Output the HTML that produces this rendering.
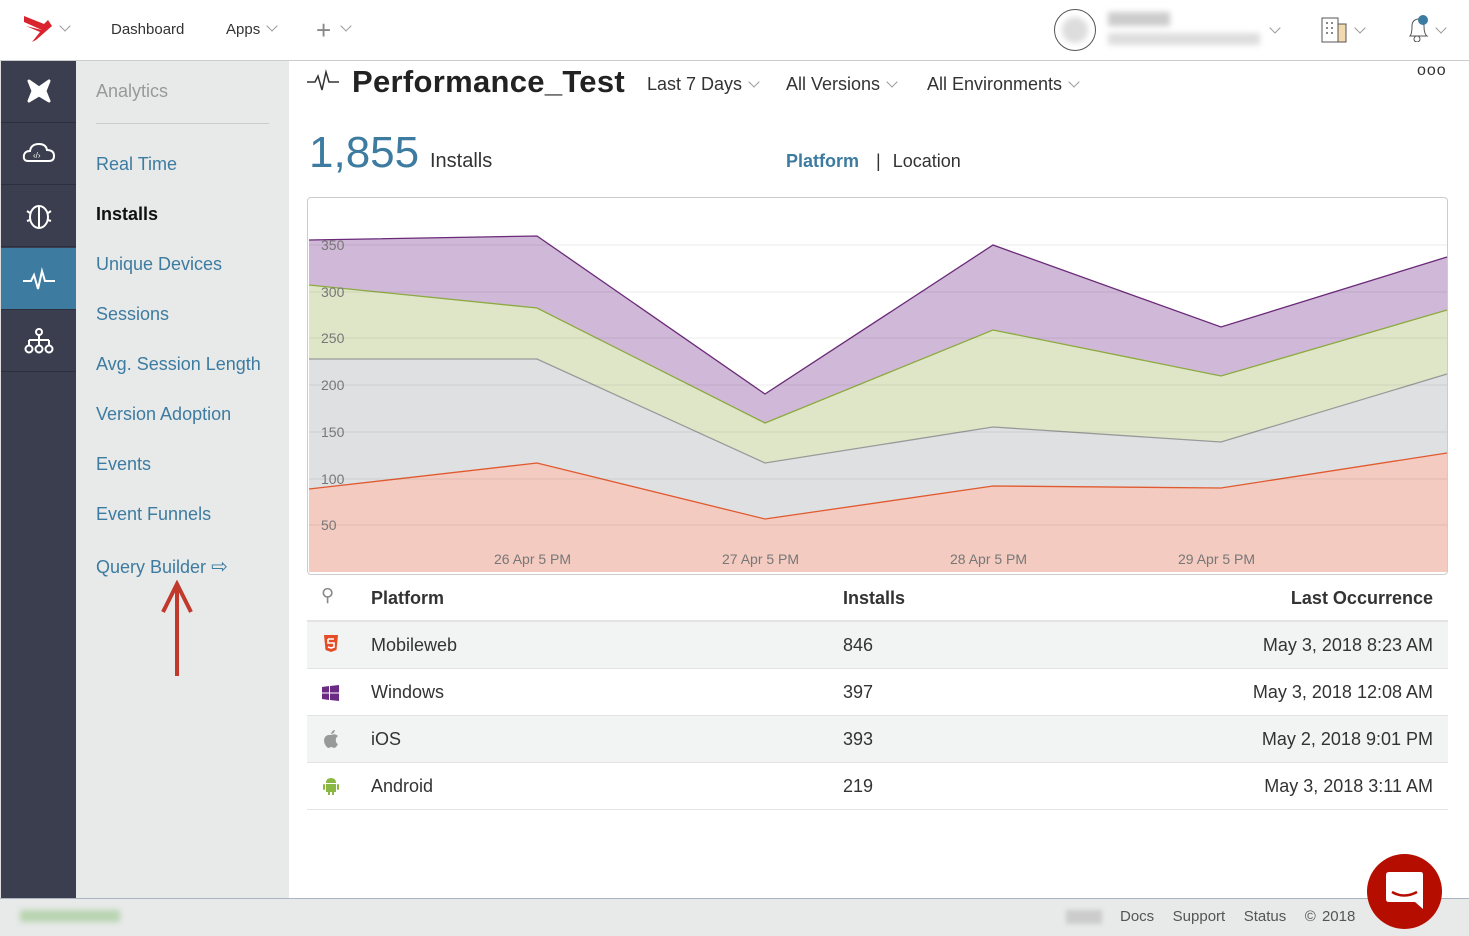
<!DOCTYPE html>
<html><head><meta charset="utf-8"><style>
*{box-sizing:border-box;margin:0;padding:0}
body{width:1469px;height:936px;overflow:hidden;font-family:"Liberation Sans",sans-serif;background:#fff;position:relative;color:#333}
.a{position:absolute}
.hdr{left:0;top:0;width:1469px;height:61px;background:#fff;border-bottom:1px solid #ccc}
.nav{font-size:15px;color:#333;top:21px}
.chev{display:inline-block;width:8px;height:8px;border-right:1px solid #999;border-bottom:1px solid #999;transform:rotate(45deg);margin-left:8px;position:relative;top:-4px}
.ca{position:absolute;width:8px;height:8px;border-right:1px solid #999;border-bottom:1px solid #999;transform:rotate(45deg)}
.side{left:0;top:61px;width:76px;height:837px;background:#3a3e4f;border-left:1px solid #ddd}
.si{position:absolute;left:0;width:76px;height:62px;border-bottom:1px solid #2c2f3d}
.sub{left:76px;top:61px;width:213px;height:837px;background:#e8eaea}
.sub div{position:absolute;left:20px;font-size:18px;color:#3d7ba0}
.foot{left:0;top:898px;width:1469px;height:38px;background:#e8eaea;border-top:1px solid #aab4c0}
.row{position:absolute;left:307px;width:1141px;height:47px;border-bottom:1px solid #e3e3e3;font-size:18px}
.row span{position:absolute;top:13px}
.c1{left:64px}.c2{left:536px}.c3{right:15px}
</style></head><body>
<div class="a hdr"></div>
<svg class="a" style="left:22px;top:14px" width="34" height="30" viewBox="0 0 34 30"><path d="M2 2 L22 10 L26 6 L30 12 L14 26 L10 28 L18 18 L4 12 L20 16 L2 8Z" fill="#d9232e"/></svg>
<span class="ca" style="left:61px;top:22px"></span>
<div class="a nav" style="left:111px">Dashboard</div>
<div class="a nav" style="left:226px">Apps<span class="chev"></span></div>
<div class="a" style="left:316px;top:15px;font-size:26px;color:#888">+</div>
<span class="ca" style="left:342px;top:22px"></span>
<div class="a" style="left:1054px;top:9px;width:42px;height:42px;border:1px solid #555;border-radius:50%"></div>
<div class="a" style="left:1062px;top:17px;width:26px;height:26px;background:#ddd;border-radius:50%;filter:blur(3px)"></div>
<div class="a" style="left:1108px;top:12px;width:62px;height:14px;background:#ccc;filter:blur(3px)"></div>
<div class="a" style="left:1108px;top:33px;width:152px;height:12px;background:#ddd;filter:blur(3px)"></div>
<span class="ca" style="left:1271px;top:24px"></span>
<svg class="a" style="left:1320px;top:14px" width="28" height="30"><rect x="2" y="4" width="16" height="24" fill="none" stroke="#555"/><rect x="18" y="10" width="8" height="18" fill="#f3d9b0" stroke="#555"/><g fill="#888"><rect x="6" y="8" width="2" height="2"/><rect x="11" y="8" width="2" height="2"/><rect x="6" y="13" width="2" height="2"/><rect x="11" y="13" width="2" height="2"/><rect x="6" y="18" width="2" height="2"/><rect x="11" y="18" width="2" height="2"/></g></svg>
<span class="ca" style="left:1356px;top:24px"></span>
<svg class="a" style="left:1406px;top:14px" width="26" height="28"><path d="M4 22 Q6 20 6 12 Q6 6 12 5 Q18 6 18 12 Q18 20 21 22Z" fill="none" stroke="#555"/><circle cx="11" cy="25" r="3" fill="none" stroke="#555"/><circle cx="17" cy="6" r="5" fill="#3d7ba0"/></svg>
<span class="ca" style="left:1437px;top:24px"></span>

<div class="a side">
<div class="si" style="top:0"><svg style="margin:16px 24px" width="28" height="28"><path d="M4 4 L14 11 L24 4 L20 14 L24 24 L14 18 L4 24 L8 14Z" fill="#fff" stroke="#fff" stroke-width="3" stroke-linejoin="round"/></svg></div>
<div class="si" style="top:62px"><svg style="margin:18px 21px" width="34" height="24"><path d="M6 20 Q1 20 2 14 Q3 10 8 10 Q9 3 17 3 Q24 3 25 9 Q32 9 32 15 Q32 20 27 20Z" fill="none" stroke="#fff" stroke-width="2"/><text x="11" y="17" fill="#fff" font-size="8">‹/›</text></svg></div>
<div class="si" style="top:124px"><svg style="margin:14px 24px" width="28" height="32"><ellipse cx="14" cy="18" rx="9" ry="11" fill="none" stroke="#fff" stroke-width="2"/><line x1="14" y1="8" x2="14" y2="29" stroke="#fff" stroke-width="2"/><path d="M2 12 L5 14 M26 12 L23 14 M2 22 L5 21 M26 22 L23 21" stroke="#fff" stroke-width="2"/></svg></div>
<div class="si" style="top:187px;background:#3d7ba0;height:62px"><svg style="margin:19px 22px" width="32" height="24"><path d="M0 14 H8 L11 8 L15 22 L19 4 L22 14 H32" fill="none" stroke="#fff" stroke-width="2"/></svg></div>
<div class="si" style="top:249px"><svg style="margin:18px 23px" width="30" height="26"><circle cx="15" cy="4" r="3" fill="none" stroke="#fff" stroke-width="2"/><path d="M15 7 V12 M5 12 H25 M5 12 V17 M15 12 V17 M25 12 V17" stroke="#fff" stroke-width="2" fill="none"/><circle cx="5" cy="21" r="3.5" fill="none" stroke="#fff" stroke-width="2"/><circle cx="15" cy="21" r="3.5" fill="none" stroke="#fff" stroke-width="2"/><circle cx="25" cy="21" r="3.5" fill="none" stroke="#fff" stroke-width="2"/></svg></div>
</div>
<div class="a sub">
<div style="top:20px;color:#999">Analytics</div>
<div style="top:62px;width:173px;height:1px;background:#ccc"></div>
<div style="top:93px">Real Time</div>
<div style="top:143px;color:#111;font-weight:bold">Installs</div>
<div style="top:193px">Unique Devices</div>
<div style="top:243px">Sessions</div>
<div style="top:293px">Avg. Session Length</div>
<div style="top:343px">Version Adoption</div>
<div style="top:393px">Events</div>
<div style="top:443px">Event Funnels</div>
<div style="top:493px">Query Builder <span style="font-size:20px;color:#3d7ba0">⇨</span></div>
</div>
<svg class="a" style="left:160px;top:580px" width="34" height="98"><path d="M17 96 V8" stroke="#c0392b" stroke-width="4"/><path d="M3 32 L17 4 L31 32" fill="none" stroke="#c0392b" stroke-width="4"/></svg>

<svg class="a" style="left:307px;top:68px" width="34" height="24"><path d="M0 14 H8 L11 8 L15 22 L19 4 L22 14 H32" fill="none" stroke="#333" stroke-width="1.5"/></svg>
<div class="a" style="left:352px;top:64px;font-size:31px;font-weight:bold;color:#222;letter-spacing:0.3px">Performance_Test</div>
<div class="a" style="left:647px;top:74px;font-size:18px;color:#333">Last 7 Days<span class="chev"></span></div>
<div class="a" style="left:786px;top:74px;font-size:18px;color:#333">All Versions<span class="chev"></span></div>
<div class="a" style="left:927px;top:74px;font-size:18px;color:#333">All Environments<span class="chev"></span></div>
<div class="a" style="left:1417px;top:62px;font-size:16px;letter-spacing:1px;color:#333">ooo</div>
<div class="a" style="left:309px;top:128px;font-size:44px;color:#3d7ba0">1,855</div>
<div class="a" style="left:430px;top:150px;font-size:20px;color:#333">Installs</div>
<div class="a" style="left:786px;top:151px;font-size:18px;color:#3d7ba0;font-weight:bold">Platform <span style="color:#333;font-weight:normal;margin:0 12px">|</span><span style="color:#333;font-weight:normal">Location</span></div>

<div class="a" style="left:307px;top:197px;width:1141px;height:378px;border:1px solid #ccc;border-radius:4px"></div>
<svg class="a" style="left:0;top:0" width="1469" height="936">
<polygon points="309,240 537,236 765,394 993,245 1221,327 1447,257 1447,572 309,572" fill="#d0b8d8"/>
<polygon points="309,285 537,308 765,423 993,330 1221,376 1447,310 1447,572 309,572" fill="#dfe6c8"/>
<polygon points="309,359 537,359 765,463 993,427 1221,442 1447,374 1447,572 309,572" fill="#dfe0e2"/>
<polygon points="309,489 537,463 765,519 993,486 1221,488 1447,453 1447,572 309,572" fill="#f3cbc0"/>
<polyline points="309,240 537,236 765,394 993,245 1221,327 1447,257" fill="none" stroke="#6a2a78" stroke-width="1.3"/>
<polyline points="309,285 537,308 765,423 993,330 1221,376 1447,310" fill="none" stroke="#8caa40" stroke-width="1.3"/>
<polyline points="309,359 537,359 765,463 993,427 1221,442 1447,374" fill="none" stroke="#999" stroke-width="1.3"/>
<polyline points="309,489 537,463 765,519 993,486 1221,488 1447,453" fill="none" stroke="#e05a30" stroke-width="1.3"/>
<g stroke="#000" stroke-opacity=".08"><line x1="309" x2="1447" y1="245" y2="245"/><line x1="309" x2="1447" y1="292" y2="292"/><line x1="309" x2="1447" y1="338" y2="338"/><line x1="309" x2="1447" y1="385" y2="385"/><line x1="309" x2="1447" y1="432" y2="432"/><line x1="309" x2="1447" y1="479" y2="479"/><line x1="309" x2="1447" y1="525" y2="525"/></g>
<g font-family="Liberation Sans" font-size="14" fill="#777"><text x="321" y="250">350</text><text x="321" y="297">300</text><text x="321" y="343">250</text><text x="321" y="390">200</text><text x="321" y="437">150</text><text x="321" y="484">100</text><text x="321" y="530">50</text>
<text x="494" y="564">26 Apr 5 PM</text><text x="722" y="564">27 Apr 5 PM</text><text x="950" y="564">28 Apr 5 PM</text><text x="1178" y="564">29 Apr 5 PM</text></g>
</svg>

<div class="row" style="top:575px;height:47px;border-bottom:2px solid #e3e3e3;font-weight:bold"><span style="left:14px;top:10px;font-weight:normal;color:#888">⚲</span><span class="c1">Platform</span><span class="c2">Installs</span><span class="c3">Last Occurrence</span></div>
<div class="row" style="top:622px;background:#f2f3f3"><span style="left:16px"><svg width="16" height="18"><path d="M1 0 H15 L13.5 15 L8 17 L2.5 15Z" fill="#e44d26"/><path d="M5 4 H11 M5 4 V8 H11 V12 L8 13 L5 12" stroke="#fff" stroke-width="1.6" fill="none"/></svg></span><span class="c1">Mobileweb</span><span class="c2">846</span><span class="c3">May 3, 2018 8:23 AM</span></div>
<div class="row" style="top:669px"><span style="left:15px;top:16px"><svg width="17" height="16"><path d="M0 2 L7 1 V7.5 H0Z M8 1 L17 0 V7.5 H8Z M0 8.5 H7 V15 L0 14Z M8 8.5 H17 V16 L8 15Z" fill="#6b2a83"/></svg></span><span class="c1">Windows</span><span class="c2">397</span><span class="c3">May 3, 2018 12:08 AM</span></div>
<div class="row" style="top:716px;background:#f2f3f3"><span style="left:16px;top:14px"><svg width="16" height="18"><path d="M8 5 Q12 3 15 6 Q12 8 13 12 Q14 14 15 14 Q13 18 11 18 Q9 17 8 17 Q6 18 5 18 Q1 15 1 10 Q2 4 8 5Z M8 4 Q9 0 12 0 Q11 4 8 4Z" fill="#999"/></svg></span><span class="c1">iOS</span><span class="c2">393</span><span class="c3">May 2, 2018 9:01 PM</span></div>
<div class="row" style="top:763px"><span style="left:16px;top:14px"><svg width="16" height="18"><path d="M3 6 Q3 1 8 1 Q13 1 13 6Z" fill="#8ab843"/><rect x="3" y="7" width="10" height="8" fill="#8ab843"/><rect x="0" y="7" width="2" height="6" rx="1" fill="#8ab843"/><rect x="14" y="7" width="2" height="6" rx="1" fill="#8ab843"/><rect x="5" y="14" width="2" height="4" fill="#8ab843"/><rect x="9" y="14" width="2" height="4" fill="#8ab843"/></svg></span><span class="c1">Android</span><span class="c2">219</span><span class="c3">May 3, 2018 3:11 AM</span></div>

<div class="a foot"></div>
<div class="a" style="left:20px;top:910px;width:100px;height:12px;background:#b8d4b0;filter:blur(3px)"></div>
<div class="a" style="left:1066px;top:910px;width:36px;height:14px;background:#ccc;filter:blur(2px)"></div>
<div class="a" style="left:1120px;top:908px;font-size:15px;color:#555;word-spacing:2px">Docs &nbsp; Support &nbsp; Status &nbsp; © 2018</div>
<div class="a" style="left:1367px;top:854px;width:75px;height:75px;border-radius:50%;background:#b50e00"></div>
<svg class="a" style="left:1386px;top:872px" width="38" height="40"><path d="M3 0 H35 Q37 0 37 3 V37 L29 30 H3 Q0 30 0 27 V3 Q0 0 3 0Z" fill="#fff"/><path d="M6 20 Q18 27 31 20" stroke="#b50e00" stroke-width="2.5" fill="none"/></svg>
</body></html>
